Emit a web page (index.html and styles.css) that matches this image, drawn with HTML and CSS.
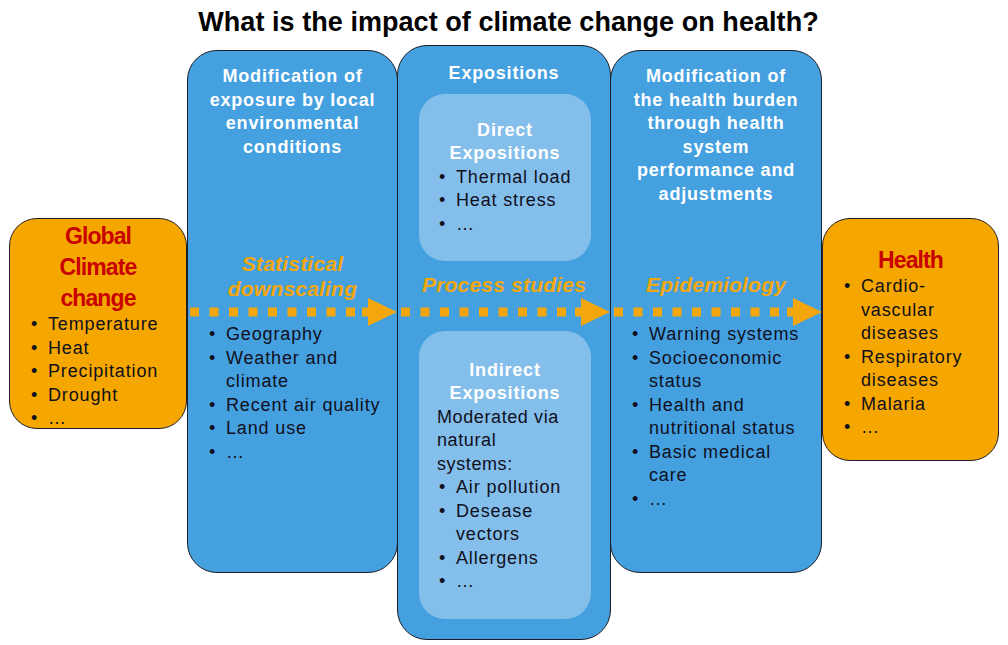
FILE: index.html
```html
<!DOCTYPE html>
<html lang="en">
<head>
<meta charset="utf-8">
<title>What is the impact of climate change on health?</title>
<link rel="stylesheet" href="styles.css">
</head>
<body>
<h1 class="title">What is the impact of climate change on health?</h1>
<div class="diagram">
  <div class="box box-left">
    <h2 class="box-head">Global<br>Climate<br>change</h2>
    <ul class="list">
      <li>Temperature</li>
      <li>Heat</li>
      <li>Precipitation</li>
      <li>Drought</li>
      <li class="dots">…</li>
    </ul>
  </div>

  <div class="col col-side col-1">
    <div class="col-head">
      <h3 class="col-title">Modification of<br>exposure by local<br>environmental<br>conditions</h3>
      <p class="label">Statistical<br>downscaling</p>
    </div>
    <ul class="list">
      <li>Geography</li>
      <li>Weather and<br>climate</li>
      <li>Recent air quality</li>
      <li>Land use</li>
      <li class="dots">…</li>
    </ul>
  </div>

  <div class="col col-mid">
    <h3 class="col-title mid-title">Expositions</h3>
    <div class="inner inner-direct">
      <h4 class="inner-title">Direct<br>Expositions</h4>
      <ul class="list">
        <li>Thermal load</li>
        <li>Heat stress</li>
        <li class="dots">…</li>
      </ul>
    </div>
    <p class="label label-mid">Process studies</p>
    <div class="inner inner-indirect">
      <h4 class="inner-title">Indirect<br>Expositions</h4>
      <p class="inner-text">Moderated via<br>natural<br>systems:</p>
      <ul class="list">
        <li>Air pollution</li>
        <li>Desease<br>vectors</li>
        <li>Allergens</li>
        <li class="dots">…</li>
      </ul>
    </div>
  </div>

  <div class="col col-side col-3">
    <div class="col-head">
      <h3 class="col-title">Modification of<br>the health burden<br>through health<br>system<br>performance and<br>adjustments</h3>
      <p class="label label-one">Epidemiology</p>
    </div>
    <ul class="list">
      <li>Warning systems</li>
      <li>Socioeconomic<br>status</li>
      <li>Health and<br>nutritional status</li>
      <li>Basic medical<br>care</li>
      <li class="dots">…</li>
    </ul>
  </div>

  <div class="box box-right">
    <h2 class="box-head">Health</h2>
    <ul class="list">
      <li>Cardio-<br>vascular<br>diseases</li>
      <li>Respiratory<br>diseases</li>
      <li>Malaria</li>
      <li class="dots">…</li>
    </ul>
  </div>

  <svg class="arrows" width="1008" height="36" viewBox="0 0 1008 36" aria-hidden="true">
    <g fill="#F4A70C" stroke="none">
      <polygon points="362,12.5 368,12.5 368,3 397,17 368,31 368,21.5 362,21.5"/>
      <polygon points="575,12.5 581,12.5 581,3 610,17 581,31 581,21.5 575,21.5"/>
      <polygon points="787,12.5 793,12.5 793,3 822,17 793,31 793,21.5 787,21.5"/>
    </g>
    <g stroke="#F4A70C" stroke-width="9" stroke-dasharray="9 10.5" fill="none">
      <line x1="190" y1="17" x2="356" y2="17"/>
      <line x1="401" y1="17" x2="567" y2="17"/>
      <line x1="614" y1="17" x2="781" y2="17"/>
    </g>
  </svg>
</div>
</body>
</html>
```

FILE: styles.css
```css
* {
  box-sizing: border-box;
}

html, body {
  margin: 0;
  padding: 0;
  background: #ffffff;
}

body {
  width: 1008px;
  height: 645px;
  overflow: hidden;
  font-family: "Liberation Sans", Arial, sans-serif;
  color: #10101c;
}

h1, h2, h3, h4, p, ul {
  margin: 0;
  padding: 0;
  font-weight: bold;
}

p {
  font-weight: normal;
}

.title {
  height: 45px;
  padding-top: 7px;
  padding-left: 9px;
  font-size: 27px;
  line-height: 30px;
  letter-spacing: 0.05px;
  text-align: center;
  color: #000000;
}

.diagram {
  position: relative;
  display: flex;
  align-items: flex-start;
  padding-left: 9px;
}

/* shared list styles */
.list {
  list-style: none;
  font-size: 18px;
  line-height: 23.5px;
  letter-spacing: 0.85px;
  font-weight: normal;
  color: #10101c;
}

.list li {
  display: flex;
}

.list li::before {
  content: "•";
  flex: 0 0 17px;
  letter-spacing: 0;
}

.list li.dots {
  letter-spacing: 0;
}

/* orange boxes */
.box {
  position: relative;
  z-index: 2;
  background: #F5A700;
  border: 1.5px solid #1e1e26;
  border-radius: 28px;
  margin-top: 173px;
  padding-left: 21px;
  padding-right: 2px;
}

.box-left {
  width: 178px;
  height: 211px;
  padding-top: 2px;
}

.box-right {
  width: 177px;
  height: 243px;
  padding-top: 26px;
}

.box-head {
  font-size: 23px;
  line-height: 31px;
  letter-spacing: -0.9px;
  color: #C80000;
  text-align: center;
  margin-bottom: -1px;
  margin-left: -21px;
  margin-right: -2px;
}

/* blue columns */
.col {
  position: relative;
  background: #45A0E0;
  border: 1.5px solid #1e1e26;
  border-radius: 30px;
}

.col-side {
  margin-top: 5px;
  height: 523px;
  z-index: 1;
  padding-left: 21px;
  padding-right: 2px;
}

.col-1 {
  width: 211px;
}

.col-3 {
  width: 212px;
  margin-left: -1px;
}

.col-mid {
  width: 214px;
  height: 595px;
  margin-left: -1px;
  z-index: 3;
  padding: 16px 19px 0 21px;
}

.col-head {
  height: 250px;
  padding-top: 14px;
  margin-left: -21px;
  margin-right: -2px;
  display: flex;
  flex-direction: column;
  justify-content: space-between;
}

.col-head + .list {
  margin-top: 22px;
}

.col-title {
  font-size: 18px;
  line-height: 23.5px;
  letter-spacing: 0.8px;
  color: #ffffff;
  text-align: center;
}

.label {
  font-size: 21px;
  line-height: 25px;
  font-weight: bold;
  font-style: italic;
  letter-spacing: 0.2px;
  color: #F4A70C;
  text-align: center;
}

.label-one {
  margin-bottom: 4px;
}

.mid-title {
  margin: 0 -19px 8px -21px;
}

.label-mid {
  margin: 11px -19px 34px -21px;
}

.inner {
  background: #84BEEB;
  border-radius: 26px;
  padding-left: 20px;
  padding-right: 1px;
}

.inner-direct {
  height: 167px;
  padding-top: 25px;
}

.inner-indirect {
  height: 288px;
  padding-top: 28px;
}

.inner-title {
  font-size: 18px;
  line-height: 23.5px;
  letter-spacing: 0.8px;
  color: #ffffff;
  text-align: center;
  margin-left: -20px;
  margin-right: -1px;
}

.inner-text {
  font-size: 18px;
  line-height: 23.5px;
  letter-spacing: 0.6px;
  color: #10101c;
  margin-left: -2px;
}

.arrows {
  position: absolute;
  left: 0;
  top: 250px;
  z-index: 5;
  pointer-events: none;
}
```
